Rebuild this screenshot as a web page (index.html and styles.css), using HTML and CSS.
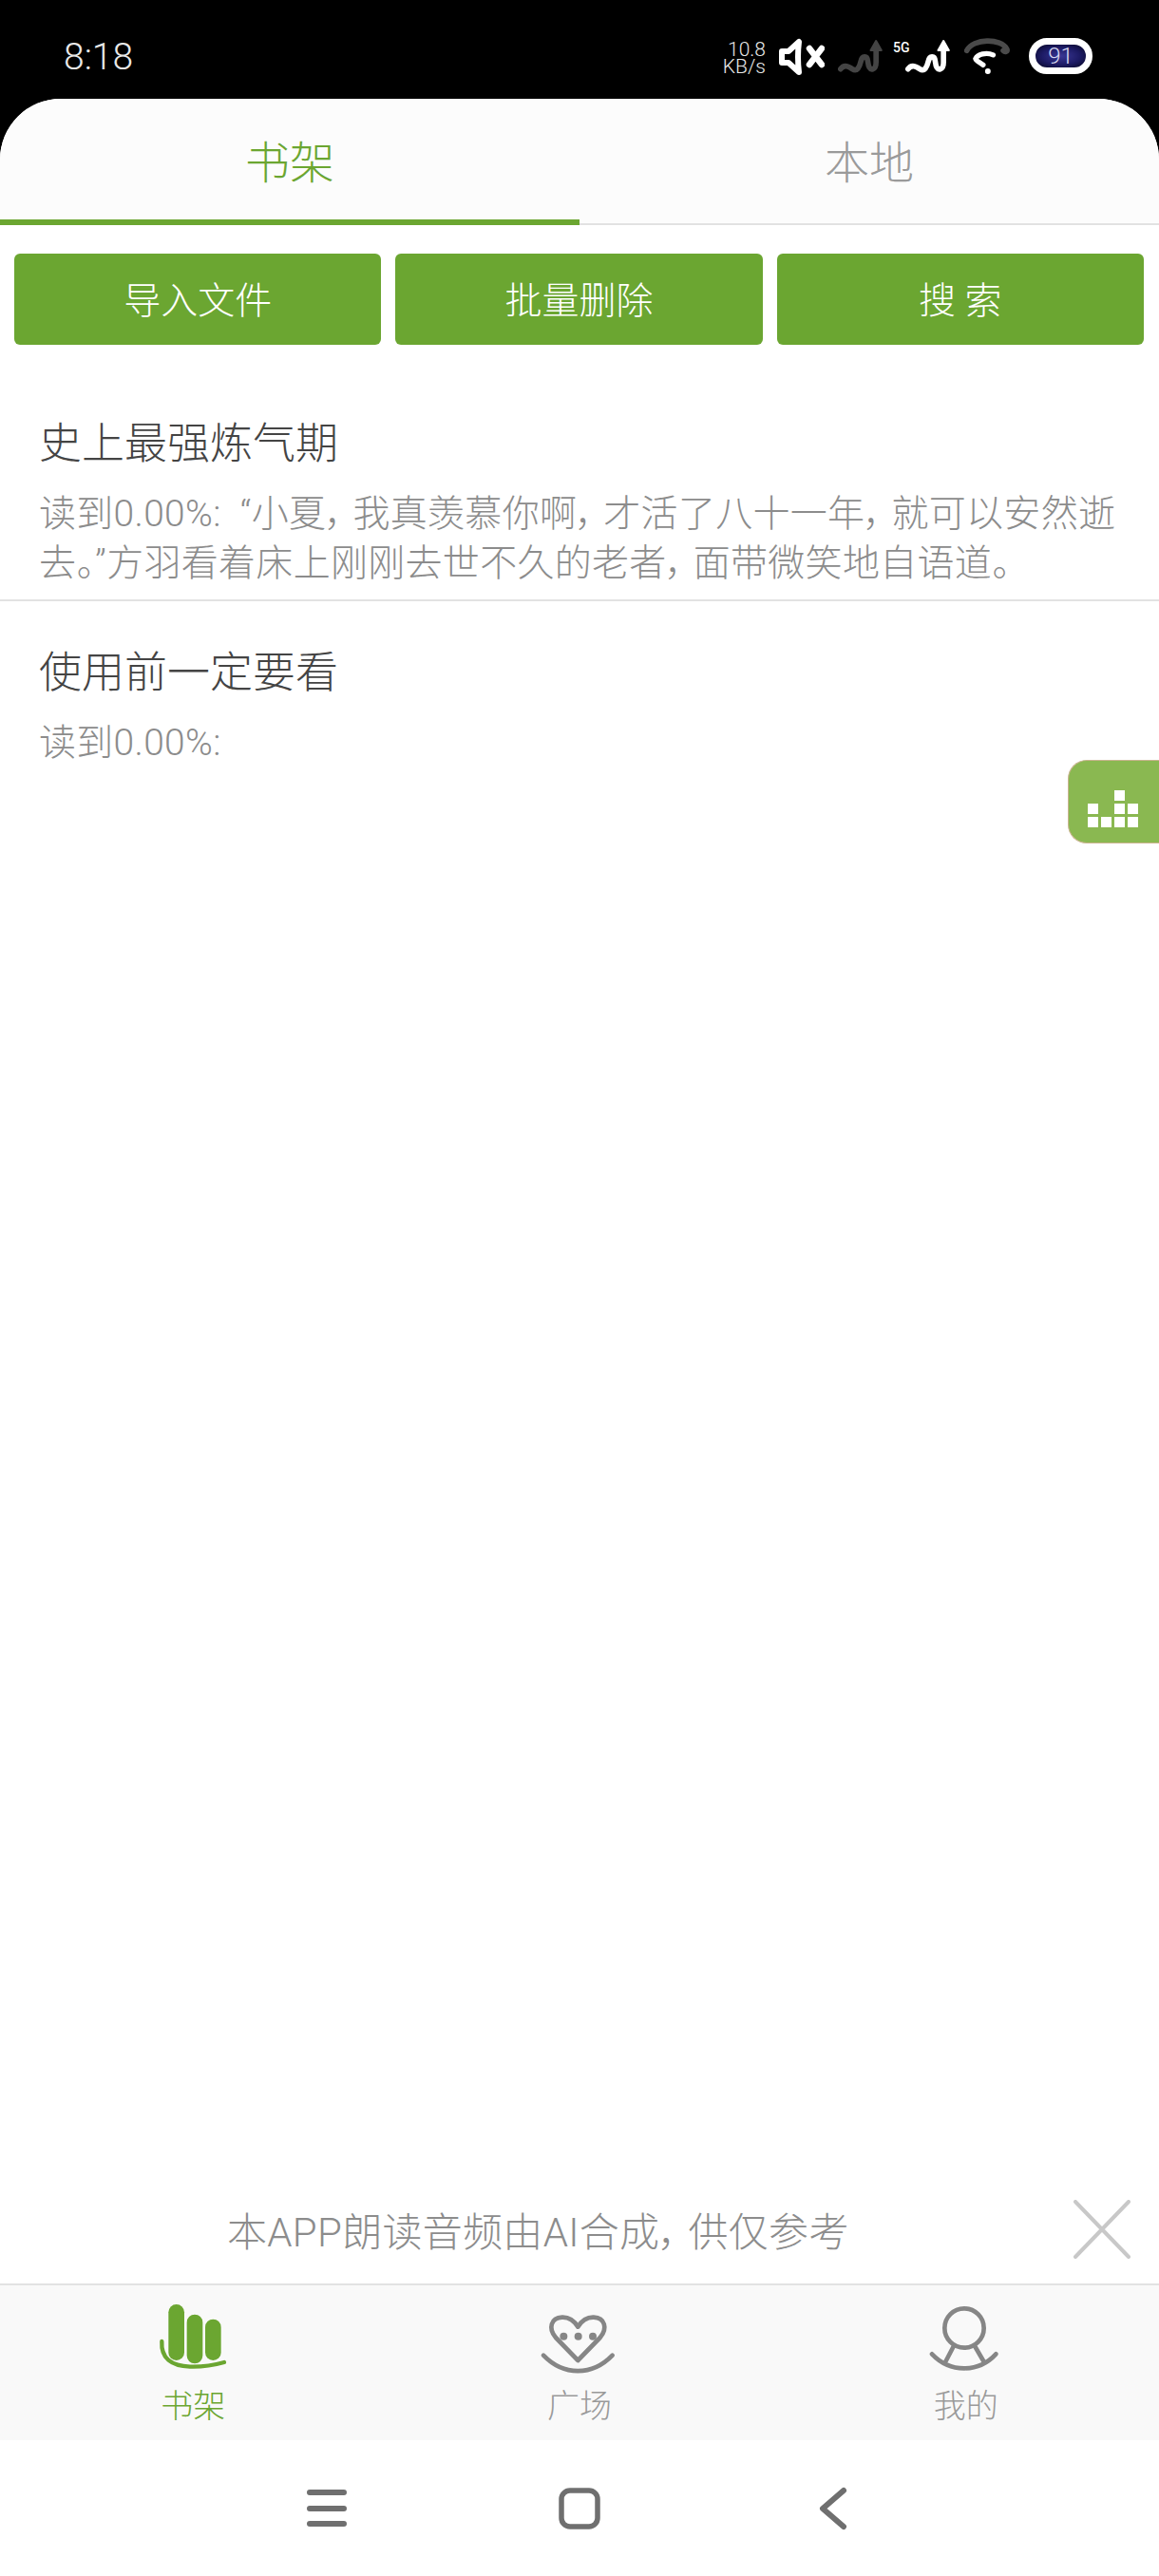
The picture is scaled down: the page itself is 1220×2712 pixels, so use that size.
FILE: index.html
```html
<!DOCTYPE html>
<html lang="zh-CN">
<head>
  <meta charset="UTF-8" />
  <meta name="viewport" content="width=device-width, initial-scale=1.0"/>
  <title>书架</title>
  <link rel="stylesheet" href="styles.css">
</head>
<body>

  <div class="status-bar">
    <span class="time">8:18</span>
    <div class="status-icons">
      <div class="speed"><span>10.8</span><span>KB/s</span></div>
      <svg class="ico-mute" viewBox="0 0 48 40">
        <path d="M3 14H10L21 4Q19 20 21 36L10 26H3Z" fill="none" stroke="#fff" stroke-width="6" stroke-linejoin="round"/>
        <path d="M32 11L45 28M45 11L32 28" fill="none" stroke="#fff" stroke-width="6.500" stroke-linecap="round"/>
      </svg>
      <svg class="ico-signal" viewBox="0 0 140 105">
        <path d="M8 92C20 75 35 85 45 92C60 102 68 85 72 68C76 50 92 48 94 68C96 85 100 95 110 92C118 90 120 80 120 70V20" fill="none" stroke="#444" stroke-width="17" stroke-linecap="round"/>
        <path d="M120 3L137 33H103Z" fill="#444" stroke="#444" stroke-width="6" stroke-linejoin="round"/>
      </svg>
      <div class="sim">
        <span class="sim-label">5G</span>
        <svg class="ico-signal" viewBox="0 0 140 105">
          <path d="M8 92C20 75 35 85 45 92C60 102 68 85 72 68C76 50 92 48 94 68C96 85 100 95 110 92C118 90 120 80 120 70V20" fill="none" stroke="#fff" stroke-width="17" stroke-linecap="round"/>
          <path d="M120 3L137 33H103Z" fill="#fff" stroke="#fff" stroke-width="6" stroke-linejoin="round"/>
        </svg>
      </div>
      <svg class="ico-wifi" viewBox="0 0 145 115">
        <path d="M8 40C28 0 118 0 136 36C138 44 130 46 124 40" fill="none" stroke="#4a4a4a" stroke-width="17" stroke-linecap="round"/>
        <path d="M92 54C70 44 42 52 36 66C38 74 50 78 60 86" fill="none" stroke="#fff" stroke-width="16" stroke-linecap="round"/>
        <circle cx="75" cy="106" r="9" fill="#fff"/>
      </svg>
      <div class="battery">91</div>
    </div>
  </div>

  <div class="sheet">
    <div class="tabs">
      <div class="tab active">书架</div>
      <div class="tab">本地</div>
    </div>

    <div class="toolbar">
      <button>导入文件</button>
      <button>批量删除</button>
      <button>搜 索</button>
    </div>

    <div class="book-list">
      <div class="book">
        <div class="book-title">史上最强炼气期</div>
        <div class="book-text">读到0.00%:&#8194;&#8220;小夏&#65292;&#8201;我真羡慕你啊&#65292;&#8201;才活了八十一年&#65292;&#8201;就可以安然逝去。&#8221;方羽看着床上刚刚去世不久的老者&#65292;&#8201;面带微笑地自语道。</div>
      </div>
      <div class="book last">
        <div class="book-title">使用前一定要看</div>
        <div class="book-text">读到0.00%:</div>
      </div>

      <div class="float-btn">
        <span class="off"></span><span class="off"></span><span></span><span class="off"></span>
        <span></span><span class="off"></span><span></span><span></span>
        <span></span><span></span><span></span><span></span>
      </div>
    </div>

    <div class="notice">
      <span class="notice-text">本APP朗读音频由AI合成&#65292;&#8201;供仅参考</span>
      <svg class="notice-close" viewBox="0 0 60 62">
        <path d="M2 2L58 60M58 2L2 60" fill="none" stroke="#c8c8c8" stroke-width="4" stroke-linecap="round"/>
      </svg>
    </div>

    <div class="tabbar">
      <div class="tabbar-item active">
        <svg viewBox="-21 0 420 300">
          <rect x="112" y="45" width="50" height="177" rx="25" fill="#6ba631"/>
          <rect x="170" y="77" width="50" height="155" rx="25" fill="#6ba631"/>
          <rect x="228" y="92" width="50" height="130" rx="25" fill="#6ba631"/>
          <path d="M91 162C88 215 120 240 180 242C220 243 260 236 288 228" fill="none" stroke="#6ba631" stroke-width="13" stroke-linecap="round"/>
        </svg>
        <span>书架</span>
      </div>
      <div class="tabbar-item">
        <svg viewBox="0 0 420 300">
          <path d="M205 222L135 150C110 120 120 88 155 86C178 85 195 100 205 116C215 100 232 85 255 86C290 88 300 120 275 150Z" fill="none" stroke="#868686" stroke-width="14" stroke-linejoin="round"/>
          <circle cx="160" cy="146" r="12" fill="#868686"/>
          <circle cx="206" cy="146" r="12" fill="#868686"/>
          <circle cx="252" cy="146" r="12" fill="#868686"/>
          <path d="M96 206C160 272 250 272 314 206" fill="none" stroke="#868686" stroke-width="14" stroke-linecap="round"/>
        </svg>
        <span>广场</span>
      </div>
      <div class="tabbar-item">
        <svg viewBox="-9 0 420 300">
          <circle cx="195" cy="120" r="62" fill="none" stroke="#868686" stroke-width="14"/>
          <path d="M93 202C150 262 240 262 295 202M160 180L135 228M230 180L258 228" fill="none" stroke="#868686" stroke-width="14" stroke-linecap="round"/>
        </svg>
        <span>我的</span>
      </div>
    </div>

    <div class="nav">
      <svg viewBox="0 0 60 60">
        <path d="M12 13H48M12 30H48M12 46H48" fill="none" stroke="#6f6f6f" stroke-width="6" stroke-linecap="round"/>
      </svg>
      <svg viewBox="0 0 60 60">
        <rect x="11" y="11" width="38" height="38" rx="9" fill="none" stroke="#6f6f6f" stroke-width="5.500"/>
      </svg>
      <svg viewBox="0 0 60 60">
        <path d="M42 11L20 30L42 49" fill="none" stroke="#6f6f6f" stroke-width="6" stroke-linecap="round" stroke-linejoin="round"/>
      </svg>
    </div>
  </div>

</body>
</html>
```

FILE: styles.css
```css
* {
  box-sizing: border-box;
}

body {
  margin: 0;
  width: 1220px;
  height: 2712px;
  display: flex;
  flex-direction: column;
  background-color: black;
  font-family: Roboto, "Noto Sans CJK SC", sans-serif;
  font-weight: 300;
  overflow: hidden;
}

/* status bar */
.status-bar {
  height: 104px;
  flex-shrink: 0;
  display: flex;
  justify-content: space-between;
  padding: 40px 70px 0 67px;
  color: #e8e8e8;
}

.time {
  font-size: 39px;
  line-height: 40px;
}

.status-icons {
  display: flex;
  align-items: flex-start;
}

.speed {
  display: flex;
  flex-direction: column;
  align-items: flex-end;
  font-size: 21px;
  line-height: 18px;
  width: 43px;
  margin-top: 3px;
  white-space: nowrap;
}

.ico-mute {
  width: 48px;
  height: 40px;
  margin-left: 14px;
}

.ico-signal {
  width: 47px;
  height: 35px;
  margin-top: 2px;
  display: block;
}

.status-icons > .ico-signal {
  margin-left: 14px;
}

.sim {
  position: relative;
  margin-left: 24px;
}

.sim-label {
  position: absolute;
  left: -13px;
  top: 3px;
  font-size: 14px;
  line-height: 14px;
  font-weight: 500;
  color: #fff;
}

.ico-wifi {
  width: 48px;
  height: 38px;
  margin-left: 15px;
}

.battery {
  width: 67px;
  height: 38px;
  margin-left: 20px;
  border: 7px solid #fff;
  border-radius: 19px;
  background: radial-gradient(ellipse at center, #3a3795 0%, #1c1a63 55%, #07061f 100%);
  color: #d8d8f0;
  font-size: 24px;
  line-height: 24px;
  text-align: center;
}

/* main sheet */
.sheet {
  flex: 1;
  display: flex;
  flex-direction: column;
  background-color: white;
  border-radius: 64px 64px 0 0;
  overflow: hidden;
}

.tabs {
  display: flex;
  background-color: #fcfcfc;
}

.tab {
  flex: 1;
  height: 133px;
  padding-top: 42px;
  text-align: center;
  font-size: 47px;
  line-height: 52px;
  color: #9a9a9a;
  border-bottom: 2px solid #e2e2e2;
}

.tab.active {
  color: #6ba631;
  border-bottom: 6px solid #6ba631;
}

.toolbar {
  display: flex;
  gap: 15px;
  padding: 30px 16px 0 15px;
}

.toolbar button {
  flex: 1;
  height: 96px;
  padding: 0 0 4px;
  background-color: #6ba631;
  border: none;
  border-radius: 6px;
  color: white;
  font-family: inherit;
  font-weight: 300;
  font-size: 39px;
}

.book-list {
  flex: 1;
  position: relative;
  padding-top: 31px;
}

.book {
  padding: 48px 24px 12px 41px;
  border-bottom: 2px solid #e2e2e2;
}

.book.last {
  padding-top: 50px;
  border-bottom: none;
}

.book-title {
  font-size: 45px;
  line-height: 52px;
  color: #444;
  margin-bottom: 21px;
}

/* palt narrows the full-width punctuation the way the app's font does */
.book-text {
  font-size: 39px;
  line-height: 52px;
  letter-spacing: 0.3px;
  color: #8c8c8c;
  font-feature-settings: "palt";
}

.float-btn {
  position: absolute;
  right: 0;
  top: 437px;
  width: 96px;
  height: 88px;
  padding: 31px 21px 0 20px;
  background-color: #8ab851;
  border: 1px solid #c9b48f;
  border-right: none;
  border-radius: 20px 0 0 20px;
  display: grid;
  grid-template-columns: repeat(4, 11px);
  grid-auto-rows: 11px;
  gap: 3px;
}

.float-btn span {
  background-color: white;
}

.float-btn span.off {
  background-color: transparent;
}

.notice {
  height: 112px;
  flex-shrink: 0;
  display: flex;
  align-items: center;
  justify-content: space-between;
  padding: 0 30px 0 239px;
}

.notice-text {
  font-size: 42px;
  letter-spacing: 0.3px;
  margin-bottom: 4px;
  color: #8c8c8c;
  font-feature-settings: "palt";
}

.notice-close {
  width: 60px;
  height: 62px;
  margin-bottom: 2px;
}

.tabbar {
  display: flex;
  flex-shrink: 0;
  height: 165px;
  padding-top: 5px;
  background-color: #f9f9f9;
  border-top: 2px solid #e2e2e2;
}

.tabbar-item {
  flex: 1;
  display: flex;
  flex-direction: column;
  align-items: center;
  font-size: 34px;
  line-height: 44px;
  color: #9a9a9a;
}

.tabbar-item svg {
  width: 140px;
  height: 100px;
}

.tabbar-item.active {
  color: #6ba631;
}

.nav {
  height: 143px;
  flex-shrink: 0;
  display: flex;
  justify-content: center;
  gap: 206px;
  padding-top: 42px;
  background-color: white;
}

.nav svg {
  width: 60px;
  height: 60px;
}
```
